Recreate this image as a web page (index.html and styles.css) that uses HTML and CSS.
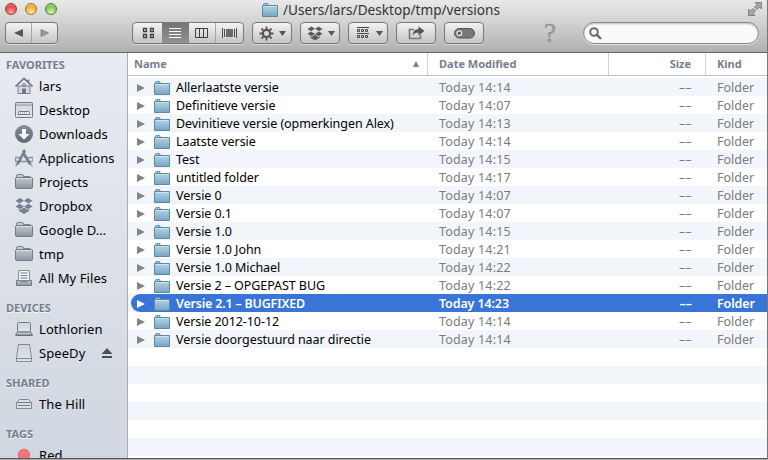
FILE: index.html
```
<!DOCTYPE html>
<html lang="nl">
<head>
<meta charset="utf-8">
<title>versions</title>
<link rel="stylesheet" href="styles.css">
</head>
<body>
<svg class="defs" width="0" height="0" aria-hidden="true">
  <defs>
    <linearGradient id="blue" x2="0" y2="1"><stop stop-color="#b7d3e4"/><stop offset="1" stop-color="#75a5c4"/></linearGradient>
    <linearGradient id="grey" x2="0" y2="1"><stop stop-color="#c3c8cf"/><stop offset="1" stop-color="#8c949f"/></linearGradient>
    <linearGradient id="pale" x2="0" y2="1"><stop stop-color="#cfd4dc"/><stop offset="1" stop-color="#e3e7ed"/></linearGradient>
    <linearGradient id="slate" x2="0" y2="1"><stop stop-color="#838c98"/><stop offset="1" stop-color="#606a77"/></linearGradient>
    <symbol id="folder" viewBox="0 0 16 14"><path d="M1.5 3V1.5q0-1 1-1h2.600q1 0 1 1V2.500" fill="#9fc3d9" stroke="#6290ac"/><path d="M.5 2.500h15v11H.5z" fill="url(#blue)" stroke="#5b8aa7"/><path d="M1 3.500h14" stroke="#d0e2ed"/></symbol>
    <symbol id="gfolder" viewBox="0 0 18 16"><path d="M1.500 4V2q0-1.500 1.500-1.500h4q1.500 0 1.500 2h6q1.500 0 1.500 1.500" fill="#c5cbd3" stroke="#77818e"/><rect x=".5" y="3.500" width="17" height="11" rx="1" fill="url(#grey)" stroke="#727c89"/><path d="M1 4.500h16" stroke="#d8dce1"/></symbol>
    <symbol id="dropbox" viewBox="0 0 18 16"><path d="M5 0 9 2.700 4.500 5.600.5 2.800zM13 0 9 2.700l4.500 2.900 4-2.800zM.5 8.400l4-2.700L9 8.500 5 11.200zM17.500 8.400l-4-2.700L9 8.500l4 2.700zM9 9.400l4 2.700 1.500-1v1.400L9 16l-5.500-3.500v-1.400l1.500 1z"/></symbol>
  </defs>
</svg>
<div class="window">
  <header class="toolbar">
    <div class="titlebar">
      <div class="lights"><i class="light red"></i><i class="light amber"></i><i class="light green"></i></div>
      <div class="title"><svg width="16" height="14"><use href="#folder"/></svg><span>/Users/lars/Desktop/tmp/versions</span></div>
      <svg class="full" width="14" height="14"><g fill="#a5a5a5" stroke="#747474" stroke-width=".8"><path d="M7 .5h6.500V7l-2-2-2.500 2.500L6.500 5 9 2.500z"/><path d="M7 13.500H.5V7l2 2L5 6.500 7.500 9 5 11.500z"/></g></svg>
    </div>
    <div class="tools">
      <div class="button nav">
        <span><svg width="10" height="8"><path d="M9 0v8L0 4z" fill="#555"/></svg></span>
        <span><svg width="10" height="8"><path d="M1 .5v7L8.500 4z" fill="#999" stroke="#777" stroke-width=".7"/></svg></span>
      </div>
      <div class="button views">
        <span><svg width="12" height="12"><g fill="none" stroke="#3e3e3e" stroke-width="1.300"><path d="M1.500 1.500h3v3h-3zM8.500 1.500h3v3h-3zM1.500 7.500h3v3h-3zM8.500 7.500h3v3h-3z"/></g></svg></span>
        <span class="on"><svg width="12" height="12"><path d="M0 1.500h12M0 4.500h12M0 7.500h12M0 10.500h12" stroke="#fff"/></svg></span>
        <span><svg width="14" height="12"><path d="M.5 1.500h12v9H.5zM4.500 1.500v9M8.500 1.500v9" fill="none" stroke="#3e3e3e"/></svg></span>
        <span><svg width="15" height="12"><path d="M.5 1v10M2.500 2v8M12.500 2v8M14.500 1v10" stroke="#4a4a4a"/><path d="M4 2h7v8H4z" fill="#6a6a6a"/></svg></span>
      </div>
      <div class="button menu"><svg width="15" height="15" viewBox="-7.500 -7.500 15 15"><circle r="3.600" fill="none" stroke="#555" stroke-width="2.200"/><path d="M0-7v2.500M0 7V4.500M-7 0h2.500M7 0H4.500M-5-5l1.800 1.800M5 5 3.200 3.200M-5 5l1.800-1.800M5-5 3.200-3.200" stroke="#555" stroke-width="1.800"/></svg><svg width="7" height="5"><path d="M0 0h7L3.500 5z" fill="#555"/></svg></div>
      <div class="button menu"><svg width="16" height="15" fill="#5b5b5b"><use href="#dropbox"/></svg><svg width="7" height="5"><path d="M0 0h7L3.500 5z" fill="#555"/></svg></div>
      <div class="button menu arrange"><svg width="12" height="12"><path d="M0 .5h12M0 6.500h12" stroke="#444"/><path d="M.5 2.500h2v2h-2zM4.500 2.500h2v2h-2zM8.500 2.500h2v2h-2zM.5 8.500h2v2h-2zM4.500 8.500h2v2h-2zM8.500 8.500h2v2h-2z" fill="none" stroke="#444"/></svg><svg width="7" height="5"><path d="M0 0h7L3.500 5z" fill="#555"/></svg></div>
      <div class="button"><svg width="17" height="14"><path d="M6 3.500H1.500v9h11V9" fill="none" stroke="#777" stroke-width="1.600"/><path d="M4.500 9.500C5 5 7 3.300 10.500 3.200V.3L16.500 5l-6 4.600V6.700C8 6.600 6 7 4.500 9.500z" fill="#555"/></svg></div>
      <div class="button"><svg width="21" height="11"><rect x=".5" y=".5" width="20" height="9.500" rx="4.700" fill="#777" stroke="#555"/><circle cx="5.300" cy="5.200" r="2.300" fill="#555" stroke="#e8e8e8" stroke-width="1.300"/></svg></div>
      <div class="help">?</div>
      <div class="search"><svg width="13" height="13"><circle cx="5" cy="5" r="3.800" fill="none" stroke="#6b6b6b" stroke-width="2"/><path d="m7.700 7.700 4.300 4.300" stroke="#6b6b6b" stroke-width="2.400"/></svg></div>
    </div>
  </header>
  <main class="content">
    <aside class="sidebar">
      <h2>FAVORITES</h2>
      <ul>
        <li><svg width="18" height="18"><path d="M3 9h12v7.500H3z" fill="#d5dae1" stroke="#77818e"/><path d="M.5 9.500 9 1.500l8.500 8M13.500 5V2.500" fill="none" stroke="#6f7986" stroke-width="1.700"/><path d="M7 11.500h4v5H7z" fill="#6f7986"/><circle cx="9" cy="8" r="1.500" fill="none" stroke="#6f7986"/></svg><span>lars</span></li>
        <li><svg width="18" height="18"><rect x=".5" y="1.500" width="17" height="15" rx="1" fill="url(#pale)" stroke="#727c89"/><path d="M1 4h16" stroke="#8f98a4"/><path d="M3 13.500h12l-1-3H4z" fill="#f4f6f8" stroke="#727c89"/><path d="M5 12h8" stroke="#727c89" stroke-dasharray="1 1"/></svg><span>Desktop</span></li>
        <li><svg width="18" height="18"><circle cx="9" cy="9" r="9" fill="url(#slate)"/><path d="M7 4h4v5h3.500L9 14.500 3.500 9H7z" fill="#fff"/></svg><span>Downloads</span></li>
        <li><svg width="18" height="18"><path d="M0 8.500h5M13 8.500h5v4M.5 8v4.500h17" fill="none" stroke="#8a939f" stroke-width="1.500"/><path d="M2.500 15.500 9.500 2M8 3.500l7.500 12" fill="none" stroke="#75808d" stroke-width="2.700"/><path d="M7 2.500 9.500.5l1 3M1 17.500l.5-3M17.500 17.500l-2-2" stroke="#6f7986" fill="none"/></svg><span>Applications</span></li>
        <li><svg width="18" height="16"><use href="#gfolder"/></svg><span>Projects</span></li>
        <li><svg width="18" height="16" fill="#77818e"><use href="#dropbox"/></svg><span>Dropbox</span></li>
        <li><svg width="18" height="16"><use href="#gfolder"/></svg><span>Google D…</span></li>
        <li><svg width="18" height="16"><use href="#gfolder"/></svg><span>tmp</span></li>
        <li><svg width="18" height="18"><path d="M3.500 1.500h11v10h-11z" fill="#f3f5f7" stroke="#88919d"/><path d="M5.500 4h7M5.500 6.500h7M5.500 9h7" stroke="#77818e"/><path d="M1.500 11.500h3l1 1h7l1-1h3v5h-15z" fill="url(#grey)" stroke="#727c89"/></svg><span>All My Files</span></li>
      </ul>
      <h2>DEVICES</h2>
      <ul>
        <li><svg width="18" height="18"><rect x="2.500" y="2.500" width="13" height="9.500" rx="1" fill="url(#pale)" stroke="#727c89"/><path d="M2.500 12h13l2 3H.5z" fill="#b9c0c9" stroke="#727c89"/><path d="M.5 15.500h17" stroke="#66707c"/></svg><span>Lothlorien</span></li>
        <li><svg width="18" height="18"><path d="M3.500.5h11l2 13v4h-15v-4z" fill="url(#pale)" stroke="#808995"/><path d="M1.500 14.500h15" stroke="#808995"/></svg><span>SpeeDy</span><svg class="eject" width="12" height="11"><path d="M6 0 11.500 6H.5zM1 8h10v2H1z" fill="#4c4f54"/></svg></li>
      </ul>
      <h2>SHARED</h2>
      <ul>
        <li><svg width="18" height="18"><path d="M4.500 4.500h9l3 3v6h-15v-6z" fill="#dce0e6" stroke="#808995"/><path d="M1.500 7.500h15M3 10.500h12" stroke="#77818e"/></svg><span>The Hill</span></li>
      </ul>
      <h2>TAGS</h2>
      <ul>
        <li><svg width="18" height="18"><circle cx="9" cy="9" r="5.700" fill="#f17678" stroke="#d85e60" stroke-width=".8"/></svg><span>Red</span></li>
      </ul>
    </aside>
    <section class="files">
      <div class="row head"><span>Name<i></i></span><span>Date Modified</span><span>Size</span><span>Kind</span></div>
      <div class="rows">
        <div class="row"><span><b></b><svg><use href="#folder"/></svg>Allerlaatste versie</span><span>Today 14:14</span><span>--</span><span>Folder</span></div>
        <div class="row"><span><b></b><svg><use href="#folder"/></svg>Definitieve versie</span><span>Today 14:07</span><span>--</span><span>Folder</span></div>
        <div class="row"><span><b></b><svg><use href="#folder"/></svg>Devinitieve versie (opmerkingen Alex)</span><span>Today 14:13</span><span>--</span><span>Folder</span></div>
        <div class="row"><span><b></b><svg><use href="#folder"/></svg>Laatste versie</span><span>Today 14:14</span><span>--</span><span>Folder</span></div>
        <div class="row"><span><b></b><svg><use href="#folder"/></svg>Test</span><span>Today 14:15</span><span>--</span><span>Folder</span></div>
        <div class="row"><span><b></b><svg><use href="#folder"/></svg>untitled folder</span><span>Today 14:17</span><span>--</span><span>Folder</span></div>
        <div class="row"><span><b></b><svg><use href="#folder"/></svg>Versie 0</span><span>Today 14:07</span><span>--</span><span>Folder</span></div>
        <div class="row"><span><b></b><svg><use href="#folder"/></svg>Versie 0.1</span><span>Today 14:07</span><span>--</span><span>Folder</span></div>
        <div class="row"><span><b></b><svg><use href="#folder"/></svg>Versie 1.0</span><span>Today 14:15</span><span>--</span><span>Folder</span></div>
        <div class="row"><span><b></b><svg><use href="#folder"/></svg>Versie 1.0 John</span><span>Today 14:21</span><span>--</span><span>Folder</span></div>
        <div class="row"><span><b></b><svg><use href="#folder"/></svg>Versie 1.0 Michael</span><span>Today 14:22</span><span>--</span><span>Folder</span></div>
        <div class="row"><span><b></b><svg><use href="#folder"/></svg>Versie 2 – OPGEPAST BUG</span><span>Today 14:22</span><span>--</span><span>Folder</span></div>
        <div class="row selected"><span><b></b><svg><use href="#folder"/></svg>Versie 2.1 – BUGFIXED</span><span>Today 14:23</span><span>--</span><span>Folder</span></div>
        <div class="row"><span><b></b><svg><use href="#folder"/></svg>Versie 2012-10-12</span><span>Today 14:14</span><span>--</span><span>Folder</span></div>
        <div class="row"><span><b></b><svg><use href="#folder"/></svg>Versie doorgestuurd naar directie</span><span>Today 14:14</span><span>--</span><span>Folder</span></div>
      </div>
    </section>
  </main>
</div>
</body>
</html>
```
FILE: styles.css
```
* { box-sizing: border-box; }
body { margin: 0; width: 768px; height: 460px; overflow: hidden; background: #aaa; font-family: "Noto Sans", sans-serif; font-size: 12.5px; color: #000; }
.defs { position: absolute; }
svg { display: block; flex: none; }
.window { height: 459px; display: flex; flex-direction: column; border-right: 1px solid #777; border-bottom: 1px solid #555; overflow: hidden; }
.toolbar { height: 53px; flex: none; background: linear-gradient(#e9e9e9, #cecece 50%, #b0b0b0); border-bottom: 1px solid #666; }
.titlebar { height: 22px; display: grid; grid-template-columns: 262px 1fr 19px; align-items: start; }
.lights { display: flex; gap: 8px; padding: 3px 0 0 5px; }
.light { width: 12px; height: 12px; border-radius: 50%; border: 1px solid; }
.red { background: radial-gradient(circle at 50% 85%, #ffaaa0, #e34a4a 60%, #f08b88); border-color: #98393b; }
.amber { background: radial-gradient(circle at 50% 85%, #fff09a, #edaa3d 60%, #f5c886); border-color: #a1702f; }
.green { background: radial-gradient(circle at 50% 85%, #d5ff9f, #7fc35e 60%, #b4dda0); border-color: #527f3b; }
.title { display: flex; gap: 5px; height: 19px; align-items: center; font-size: 13.6px; line-height: 19px; color: #333; white-space: nowrap; }
.full { margin: 2px 0 0; }
.tools { display: flex; padding-left: 5px; }
.button { width: 40px; height: 22px; margin-right: 8px; border: 1px solid #777; border-radius: 4px; background: linear-gradient(#f3f3f3, #c5c5c5); box-shadow: 0 1px #dadada; display: flex; align-items: center; justify-content: center; flex: none; }
.button > span { flex: 1; height: 100%; display: flex; align-items: center; justify-content: center; }
.nav { width: 53px; margin-right: 74px; }
.nav span + span, .views span:last-child { border-left: 1px solid #a5a5a5; }
.views { width: 112px; overflow: hidden; }
.views span:first-child { flex: 0 0 29px; }
.views .on { background: linear-gradient(#747474, #929292); }
.menu { justify-content: flex-start; gap: 6px; padding-left: 6px; }
.menu svg:first-child + svg { margin-left: -1px; }
.arrange { padding-left: 8px; gap: 8px; }
.help { margin-left: 50px; width: 16px; height: 22px; font: 27px/22px "Liberation Serif", serif; color: #999; -webkit-text-stroke: .4px #8c8c8c; text-align: center; }
.search { margin-left: 25px; width: 176px; height: 22px; border: 1px solid #888; border-radius: 11px; background: #fafafa; box-shadow: inset 0 1px 2px #bbb, 0 1px #ddd; padding: 4px 5px; }
.content { flex: 1; display: flex; min-height: 0; }
.sidebar { width: 128px; background: linear-gradient(#e8ebf1, #d0d7e0); border-right: 1px solid #a9adb3; overflow: hidden; }
h2 { margin: 0; padding-left: 6px; height: 21px; font-size: 11px; line-height: 24px; font-weight: 700; color: #74808e; text-shadow: 0 1px #f4f5f7; }
ul { list-style: none; margin: 0 0 6px; padding: 0; }
li { height: 24px; display: flex; align-items: center; gap: 6px; padding-left: 15px; white-space: nowrap; font-size: 13px; letter-spacing: .08px; }
.eject { margin-left: 10px; }
.files { flex: 1; background: #fff; min-width: 0; }
.row { height: 18px; display: grid; grid-template-columns: 300px 181px 97px 61px; line-height: 20px; color: #7b7b7b; white-space: nowrap; }
.row > span { padding-left: 11px; }
.row > span:first-child { padding-left: 9px; display: flex; align-items: center; height: 18px; color: #000; letter-spacing: -.07px; line-height: 18px; padding-top: 1px; }
.row > span:nth-child(2) { letter-spacing: .18px; }
.row > span:nth-child(3) { text-align: right; padding-right: 14px; }
.rows .row > span:nth-child(3) { transform: scaleX(1.65); transform-origin: 83px 0; }
.rows { margin-top: 2px; height: 381px; background: repeating-linear-gradient(#f2f6fb 0 18px, #fff 18px 36px); }
.row svg { width: 16px; height: 14px; margin-right: 6px; }
.row b { margin-right: 9px; border: solid transparent; border-width: 4.500px 0 4.500px 8px; border-left-color: #858585; }
.selected { margin-left: 3px; background: #3875d7; border-radius: 9px 0 0 9px; grid-template-columns: 297px 181px 97px 58px; font-weight: 600; }
.row.selected > span { color: #fff; letter-spacing: -.12px; }
.row.selected > span:first-child { padding-left: 6px; letter-spacing: -.2px; }
.selected b { border-left-color: #fff; }
.head { height: 23px; border-bottom: 1px solid #bfc2c6; font-size: 11px; line-height: 22px; font-weight: 700; }
.row.head > span { color: #75808f; border-right: 1px solid #d2d5d9; letter-spacing: 0; }
.row.head > span:first-child { height: 22px; line-height: 22px; padding: 0 8px 0 6px; justify-content: space-between; }
.row.head > span:last-child { border: 0; }
.head i { border: solid transparent; border-width: 0 3.500px 6px; border-bottom-color: #75808f; }
```
